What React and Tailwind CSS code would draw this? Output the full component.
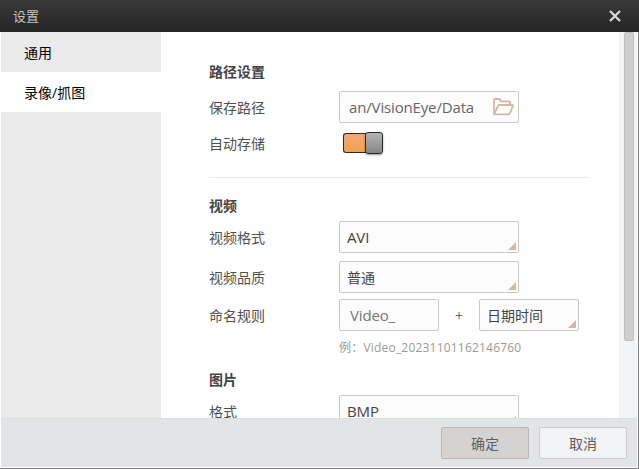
const cjk = "font-['Noto_Sans_CJK_SC',sans-serif]";
const mixed = "font-['Open_Sans','Noto_Sans_CJK_SC',sans-serif]";
const field = 'flex h-8 items-center rounded-[2px] border border-[#c8c8c8] bg-[#fcfcfc]';
const latinText = 'text-[15px] tracking-[-0.15px]';

function Heading({ children }) {
  return <h2 className="h-5 text-sm leading-5 font-bold text-[#444]">{children}</h2>;
}

function Row({ label, className = '', children }) {
  return (
    <div className={`flex h-8 shrink-0 items-center ${className}`}>
      <span className="w-[130px] shrink-0 pt-0.5 text-sm leading-5 text-[#505050]">{label}</span>
      {children}
    </div>
  );
}

function Select({ value, width = 'w-[180px]', latin = false }) {
  return (
    <div className={`${field} ${width} relative px-[7px]`}>
      <span className={`${latin ? latinText : 'pt-0.5 text-sm'} leading-5 text-[#444]`}>{value}</span>
      <svg className="absolute right-[2px] bottom-[2px]" width="8" height="8" viewBox="0 0 8 8">
        <path d="M8 0V8H0Z" fill="#d3b7a6" />
      </svg>
    </div>
  );
}

function FolderIcon() {
  return (
    <svg width="21" height="18" viewBox="0 0 21 18" fill="none" stroke="#d3b7a6" strokeWidth="1.8" strokeLinejoin="round">
      <path d="M1 16.2V1.8Q1 1 1.8 1H6.3Q7 1 7.3 1.8L7.9 3.3H16Q17 3.3 17 4.3V7" />
      <path d="M1.2 16.2L5 7.9Q5.4 7 6.3 7H19.3Q20.3 7 19.9 7.9L17 15.4Q16.6 16.3 15.7 16.3H1.2Z" />
    </svg>
  );
}

function Switch() {
  return (
    <div className="ml-1 flex h-[22px] w-10 items-center">
      <div className="h-5 w-[23px] rounded-l-[3px] border border-r-0 border-[#292929] bg-linear-to-b from-[#f3a778] to-[#f2a148]" />
      <div className="h-[22px] w-[18px] -ml-px rounded-[3px] border border-[#292929] bg-linear-to-b from-[#b4b4b4] to-[#868686] shadow-[0_1px_2px_rgba(0,0,0,0.4)]" />
    </div>
  );
}

export default function App() {
  return (
    <div className={`flex h-[469px] w-[639px] flex-col overflow-hidden bg-white ${mixed}`}>
      <header className="flex h-8 shrink-0 items-center justify-between bg-linear-to-b from-[#393939] to-[#252525] pr-[18px] pl-[13px]">
        <span className={`text-[13px] leading-5 text-[#c4c4c4] ${cjk}`}>设置</span>
        <svg width="12" height="12" viewBox="0 0 12 12" stroke="#dcdcd8" strokeWidth="2.2">
          <path d="M1 1L11 11M11 1L1 11" />
        </svg>
      </header>
      <div className="flex min-h-0 flex-1 flex-col border-r border-b border-[#7d7d82] pr-px pb-px pl-px">
        <div className="flex min-h-0 flex-1">
          <nav className="w-40 shrink-0 bg-[#ebebeb] text-sm text-black">
            <div className="flex h-10 items-center pt-0.5 pl-[23px]">通用</div>
            <div className="flex h-10 items-center bg-white pt-0.5 pl-[23px]">录像/抓图</div>
          </nav>
          <main className="flex min-w-0 flex-1 flex-col overflow-hidden pt-[30px] pr-[30px] pl-12">
            <Heading>路径设置</Heading>
            <Row label="保存路径" className="mt-[9px]">
              <div className={`${field} w-[180px] justify-between pr-1 pl-[9px]`}>
                <span className={`${latinText} leading-5 text-[#666]`}>an/VisionEye/Data</span>
                <FolderIcon />
              </div>
            </Row>
            <Row label="自动存储" className="mt-1">
              <Switch />
            </Row>
            <hr className="mt-[18px] mb-[18px] w-[380px] border-[#ebebeb]" />
            <Heading>视频</Heading>
            <Row label="视频格式" className="mt-[5px]">
              <Select value="AVI" latin />
            </Row>
            <Row label="视频品质" className="mt-2">
              <Select value="普通" />
            </Row>
            <Row label="命名规则" className="mt-1.5">
              <div className={`${field} w-[100px] pl-2.5`}>
                <span className={`${latinText} leading-5 text-[#777]`}>Video_</span>
              </div>
              <span className="w-10 pt-0.5 text-center text-sm text-[#666]">+</span>
              <Select value="日期时间" width="w-[100px]" />
            </Row>
            <p className="mt-[7px] ml-[130px] h-5 shrink-0 text-xs leading-5 tracking-[0.2px] whitespace-nowrap text-[#999]">例：Video_20231101162146760</p>
            <div className="mt-3 shrink-0">
              <Heading>图片</Heading>
            </div>
            <Row label="格式" className="mt-[5px]">
              <Select value="BMP" latin />
            </Row>
          </main>
          <div className="flex w-[18px] shrink-0 justify-center bg-[#f1f3f5] pl-[2px]">
            <div className="h-[309px] w-2.5 rounded-[2px] border border-[#bebcbd] bg-[#d0cecf]" />
          </div>
        </div>
        <footer className="flex h-[49px] shrink-0 items-center justify-end gap-2.5 border-t border-[#d7dfdf] bg-[#e3e4e6] pr-2.5 text-sm text-[#606060]">
          <button className="h-8 w-[88px] rounded-[2px] border border-[#b8b6b5] bg-[#d5d3d1] pt-0.5">确定</button>
          <button className="h-8 w-[88px] rounded-[2px] border border-[#cdcdcf] bg-[#f1f3f5] pt-0.5">取消</button>
        </footer>
      </div>
    </div>
  );
}
